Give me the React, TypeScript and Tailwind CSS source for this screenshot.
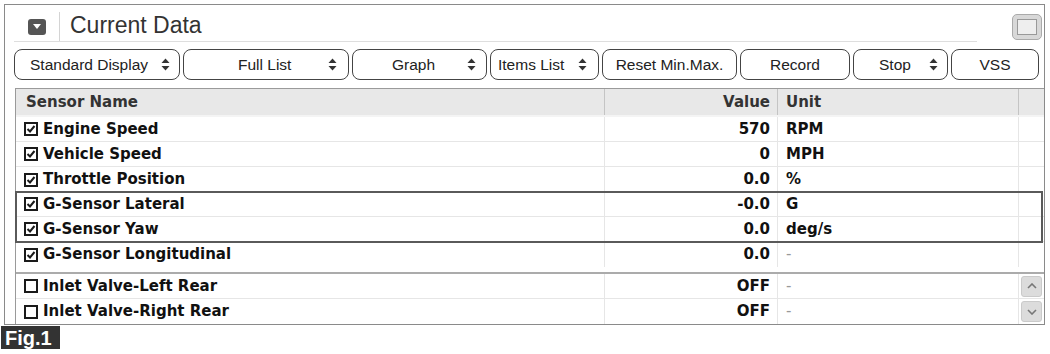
import React from 'react';

const Updown = () => (
  <svg width="9" height="13" viewBox="0 0 9 13" className="shrink-0">
    <path d="M4.5 0.5 L8.5 5 L0.5 5 Z" fill="#333" />
    <path d="M4.5 12.5 L8.5 8 L0.5 8 Z" fill="#333" />
  </svg>
);

const Check = ({ on }: { on: boolean }) => (
  <span className="w-[14px] h-[14px] border-2 border-[#1a1a1a] bg-white flex items-center justify-center shrink-0">
    {on && (
      <svg width="10" height="10" viewBox="0 0 10 10">
        <path d="M1.5 5 L4 7.5 L8.5 2" stroke="#1a1a1a" strokeWidth="2" fill="none" />
      </svg>
    )}
  </span>
);

const buttons = [
  { label: 'Standard Display', w: 'w-[166px]', arrow: true, justify: 'justify-between pl-[15px] pr-[9px]' },
  { label: 'Full List', w: 'w-[166px]', arrow: true, justify: 'justify-between pl-[54px] pr-[11px]' },
  { label: 'Graph', w: 'w-[135px]', arrow: true, justify: 'justify-between pl-[39px] pr-[10px]' },
  { label: 'Items List', w: 'w-[109px]', arrow: true, justify: 'justify-between pl-[7px] pr-[11px]' },
  { label: 'Reset Min.Max.', w: 'w-[135px]', arrow: false, justify: 'justify-center' },
  { label: 'Record', w: 'w-[110px]', arrow: false, justify: 'justify-center' },
  { label: 'Stop', w: 'w-[95px]', arrow: true, justify: 'justify-between pl-[25px] pr-[9px]' },
  { label: 'VSS', w: 'w-[88px]', arrow: false, justify: 'justify-center' },
];

type Row = { name: string; value: string; unit: string; on: boolean };

const rowsTop: Row[] = [
  { name: 'Engine Speed', value: '570', unit: 'RPM', on: true },
  { name: 'Vehicle Speed', value: '0', unit: 'MPH', on: true },
  { name: 'Throttle Position', value: '0.0', unit: '%', on: true },
];
const rowsBox: Row[] = [
  { name: 'G-Sensor Lateral', value: '-0.0', unit: 'G', on: true },
  { name: 'G-Sensor Yaw', value: '0.0', unit: 'deg/s', on: true },
];
const rowsMid: Row[] = [{ name: 'G-Sensor Longitudinal', value: '0.0', unit: '-', on: true }];
const rowsBottom: Row[] = [
  { name: 'Inlet Valve-Left Rear', value: 'OFF', unit: '-', on: false },
  { name: 'Inlet Valve-Right Rear', value: 'OFF', unit: '-', on: false },
];

const cols = 'grid grid-cols-[589px_173px_241px_1fr]';

function DataRow({ r, last, scroll }: { r: Row; last?: boolean; scroll?: 'up' | 'down' }) {
  return (
    <div className={`${cols} h-[25px] ${last ? '' : 'border-b border-[#e6e6e6]'}`}>
      <div className="flex items-center gap-[5px] pl-[8px] border-r border-[#e6e6e6]">
        <Check on={r.on} />
        <span>{r.name}</span>
      </div>
      <div className="flex items-center justify-end pr-[7px] border-r border-[#e6e6e6]">{r.value}</div>
      <div className="flex items-center pl-[8px] border-r border-[#e6e6e6]">
        {r.unit === '-' ? <span className="text-[#999] font-normal">-</span> : r.unit}
      </div>
      <div className="flex items-center justify-center">
        {scroll && (
          <span className="w-[21px] h-[21px] rounded-[3px] bg-[#dcdcdc] border border-[#cacaca] flex items-center justify-center">
            <svg width="10" height="6" viewBox="0 0 10 6">
              <path
                d={scroll === 'up' ? 'M1 5 L5 1 L9 5' : 'M1 1 L5 5 L9 1'}
                stroke="#777"
                strokeWidth="1.6"
                fill="none"
              />
            </svg>
          </span>
        )}
      </div>
    </div>
  );
}

export default function App() {
  return (
    <div className="w-[1050px] h-[354px] bg-white relative" style={{ fontFamily: '"Liberation Sans", Arial, sans-serif' }}>
      <div className="ml-[4px] pt-[4px]">
        <div className="w-[1041px] h-[321px] border border-[#8a8a8a] overflow-hidden flex flex-col">
          {/* title bar */}
          <div className="h-[38px] flex items-end relative">
            <div className="ml-[9px] w-[963px] h-[30px] border-b border-[#dedede] flex items-center">
              <div className="w-[46px] h-full flex items-center justify-center border-r border-[#d4d4d4]">
                <span className="w-[18px] h-[16px] rounded-[3px] bg-[#555] flex items-center justify-center">
                  <svg width="8" height="5" viewBox="0 0 8 5">
                    <path d="M0 0 L8 0 L4 5 Z" fill="#fff" />
                  </svg>
                </span>
              </div>
              <span className="ml-[10px] text-[23px] text-[#333] leading-none mb-[2px]">Current Data</span>
            </div>
            <span className="absolute right-[2px] top-[9px] w-[30px] h-[26px] rounded-[5px] bg-[#d8d8d8] border border-[#aaa] flex items-center justify-center">
              <span className="w-[20px] h-[16px] bg-[#eee] border border-[#999]" />
            </span>
          </div>

          {/* buttons */}
          <div className="flex gap-[3px] ml-[9px] mt-[7px] h-[31px] shrink-0">
            {buttons.map((b) => (
              <div
                key={b.label}
                className={`${b.w} h-full border border-[#444] rounded-[8px] flex items-center ${b.justify} text-[15.5px] text-[#222]`}
              >
                <span>{b.label}</span>
                {b.arrow && <Updown />}
              </div>
            ))}
          </div>

          {/* table */}
          <div
            className="ml-[10px] mt-[8px] flex-1 border-l border-t border-[#9a9a9a] font-bold text-[15px] text-[#111]"
            style={{ fontFamily: '"DejaVu Sans", Verdana, sans-serif' }}
          >
            <div className={`${cols} h-[28px] bg-[#e8e8e8] border-b-[2px] border-[#f4f4f4] text-[#333]`}>
              <div className="flex items-center pl-[10px] border-r border-[#c4c4c4]">Sensor Name</div>
              <div className="flex items-center justify-end pr-[7px] border-r border-[#c4c4c4]">Value</div>
              <div className="flex items-center pl-[8px] border-r border-[#c4c4c4]">Unit</div>
              <div />
            </div>
            {rowsTop.map((r, i) => (
              <DataRow key={r.name} r={r} last={i === rowsTop.length - 1} />
            ))}
            <div className="relative">
              {rowsBox.map((r) => (
                <DataRow key={r.name} r={r} />
              ))}
              <div className="absolute -left-[1px] right-[1px] -top-[1px] -bottom-[1px] border-2 border-[#5a5a5a] pointer-events-none" />
            </div>
            {rowsMid.map((r) => (
              <DataRow key={r.name} r={r} last />
            ))}
            <div className="h-[7px] border-b-[2px] border-[#ababab]" />
            <DataRow r={rowsBottom[0]} scroll="up" />
            <DataRow r={rowsBottom[1]} scroll="down" last />
          </div>
        </div>
      </div>
      <div className="absolute left-[1px] top-[326px] w-[59px] h-[23px] bg-[#333] text-white font-bold text-[20px] leading-none flex items-center pl-[4px]">
        Fig.1
      </div>
    </div>
  );
}
